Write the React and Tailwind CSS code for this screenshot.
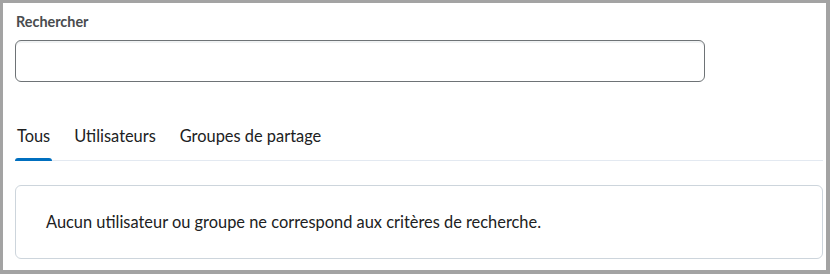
import { useState } from 'react';

const tabs = ['Tous', 'Utilisateurs', 'Groupes de partage'];

const App = () => {
  const [activeTab, setActiveTab] = useState('Tous');
  const [query, setQuery] = useState('');

  return (
    <div
      className="w-[830px] h-[274px] bg-white border-[#a3a3a3] border-t-[3px] border-l-[3px] border-r-[4px] border-b-[4px] text-[#202122]"
      style={{ fontFamily: 'Lato, "Open Sans", sans-serif' }}
    >
      <div className="pl-[12px] pr-[3px] pt-[10px]">
        {/* Search */}
        <label className="block text-[14.4px] font-bold text-[#494c4e] leading-[17px] pl-[1px]">
          Rechercher
        </label>
        <input
          type="text"
          value={query}
          onChange={e => setQuery(e.target.value)}
          className="mt-[10px] block w-[690px] h-[42px] rounded-[6px] border border-[#6e7376] bg-white shadow-[inset_0_2px_0_0_rgba(181,189,194,0.2)] outline-none px-3"
        />

        {/* Tabs */}
        <div className="mt-[44px] flex gap-[20px] border-b border-[#e3e9f1]">
          {tabs.map(tab => (
            <button
              key={tab}
              onClick={() => setActiveTab(tab)}
              className="relative px-[2px] pb-[14px] text-[16.4px] leading-[20px] text-[#202122]"
            >
              {tab}
              {activeTab === tab && (
                <span className="absolute left-0 right-0 bottom-[-1px] h-[3px] rounded-t-[3px] bg-[#006fbf]" />
              )}
            </button>
          ))}
        </div>

        {/* Results */}
        <div className="mt-[24px] h-[74px] rounded-[6px] border border-[#cdd5dc] flex items-center pl-[30px]">
          <p className="text-[16.4px] text-[#202122]">
            Aucun utilisateur ou groupe ne correspond aux critères de recherche.
          </p>
        </div>
      </div>
    </div>
  );
};

export default App;
